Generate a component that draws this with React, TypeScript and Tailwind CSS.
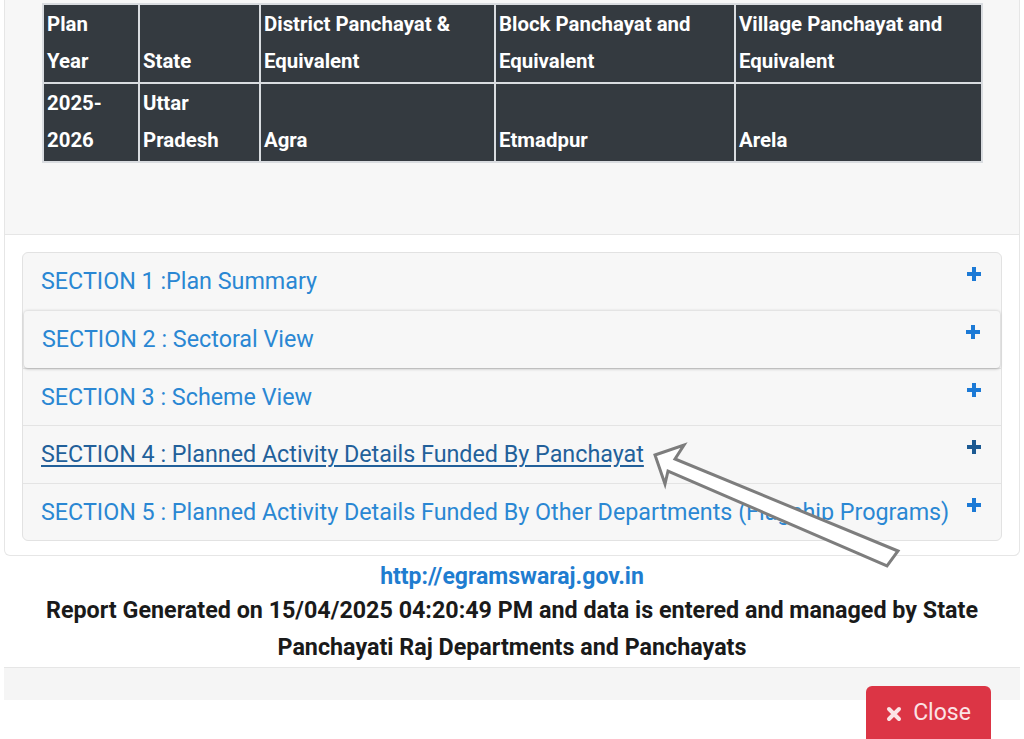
import React from "react";

const headers = [
  ["Plan", "Year"],
  ["", "State"],
  ["District Panchayat &", "Equivalent"],
  ["Block Panchayat and", "Equivalent"],
  ["Village Panchayat and", "Equivalent"],
];

const values = [
  ["2025-", "2026"],
  ["Uttar", "Pradesh"],
  ["", "Agra"],
  ["", "Etmadpur"],
  ["", "Arela"],
];

const colWidths = ["w-[96px]", "w-[121px]", "w-[235px]", "w-[240px]", "w-[247px]"];

const sections = [
  "SECTION 1 :Plan Summary",
  "SECTION 2 : Sectoral View",
  "SECTION 3 : Scheme View",
  "SECTION 4 : Planned Activity Details Funded By Panchayat",
  "SECTION 5 : Planned Activity Details Funded By Other Departments (Flagship Programs)",
];

function Plus({ dark }: { dark?: boolean }) {
  return (
    <svg width="16" height="16" viewBox="0 0 16 16" className="shrink-0">
      <path d="M6 1h4v5h5v4h-5v5H6v-5H1V6h5z" fill={dark ? "#1c5a93" : "#1c7ad6"} />
    </svg>
  );
}

function Cell({ lines, width }: { lines: string[]; width: string }) {
  return (
    <td className={`${width} border-2 border-[#d9dce0] align-bottom px-[3px] pt-[1px] pb-[2px]`}>
      <div className="leading-[37px] whitespace-nowrap">
        {lines[0] ? <div>{lines[0]}</div> : <div>&nbsp;</div>}
        <div>{lines[1]}</div>
      </div>
    </td>
  );
}

export default function App() {
  return (
    <div
      className="relative w-[1024px] h-[739px] overflow-hidden bg-white"
      style={{ fontFamily: "Roboto, 'Noto Sans', sans-serif" }}
    >
      {/* top panel with table */}
      <div className="mx-[4px] h-[235px] bg-[#f7f7f7] border-x border-b border-[#e6e6e6] pl-[37px] pt-[3px]">
        <table className="table-fixed w-[939px] border-collapse bg-[#343a40] text-white font-bold text-[20.4px]">
          <tbody>
            <tr>
              {headers.map((h, i) => (
                <Cell key={i} lines={h} width={colWidths[i]} />
              ))}
            </tr>
            <tr>
              {values.map((v, i) => (
                <Cell key={i} lines={v} width={colWidths[i]} />
              ))}
            </tr>
          </tbody>
        </table>
      </div>

      {/* accordion card */}
      <div className="mx-[4px] h-[321px] border-x border-b border-[#e6e6e6] rounded-b-md px-[17px] pt-[17px]">
        <div className="w-[980px] rounded-md border border-[#e2e2e2] bg-[#f7f7f7]">
          {sections.map((s, i) => (
            <div
              key={i}
              className={`h-[57.4px] flex items-start justify-between pl-[18px] pr-[19px] ${
                i > 0 ? "border-t border-[#e4e4e4]" : ""
              } ${i === 1 ? "mx-[1px] shadow-[0_1px_3px_rgba(0,0,0,0.25)] rounded-sm relative" : ""}`}
            >
              <span
                className={`text-[23.3px] leading-[57px] whitespace-nowrap ${
                  i === 3 ? "text-[#22609a] underline underline-offset-[3px]" : "text-[#2a87d3]"
                }`}
              >
                {s}
              </span>
              <div className="pt-[13px]">
                <Plus dark={i === 3} />
              </div>
            </div>
          ))}
        </div>
      </div>

      {/* footer text */}
      <div className="text-center mt-[5px]">
        <div className="text-[23px] font-bold text-[#1f7dd0] leading-[31px]">http://egramswaraj.gov.in</div>
        <div className="text-[23.3px] font-bold text-[#1a1a1a] leading-[37px] whitespace-nowrap">
          <div>Report Generated on 15/04/2025 04:20:49 PM and data is entered and managed by State</div>
          <div>Panchayati Raj Departments and Panchayats</div>
        </div>
      </div>

      {/* modal footer bar */}
      <div className="mx-[4px] mt-[1px] h-[33px] bg-[#f5f5f5] border-t border-[#e6e6e6]" />
      <div className="flex justify-end pr-[33px] -mt-[14px]">
        <button className="w-[125px] h-[60px] bg-[#dc3545] rounded-md flex items-start justify-center gap-[11px] pt-[12px] text-[#fbe3e5]">
          <svg width="16" height="16" viewBox="0 0 16 16" className="mt-[8px]">
            <path d="M3 3l10 10M13 3L3 13" stroke="#fbe3e5" strokeWidth="4" strokeLinecap="round" />
          </svg>
          <span className="text-[23px] leading-[30px]">Close</span>
        </button>
      </div>

      {/* annotation arrow */}
      <svg className="absolute inset-0 pointer-events-none" width="1024" height="739" viewBox="0 0 1024 739">
        <polygon
          points="655,455 684,445 675,459 898,551 887,566 668,471 665,484"
          fill="#ffffff"
          stroke="#7d7d7d"
          strokeWidth="3"
          strokeLinejoin="miter"
        />
      </svg>
    </div>
  );
}
